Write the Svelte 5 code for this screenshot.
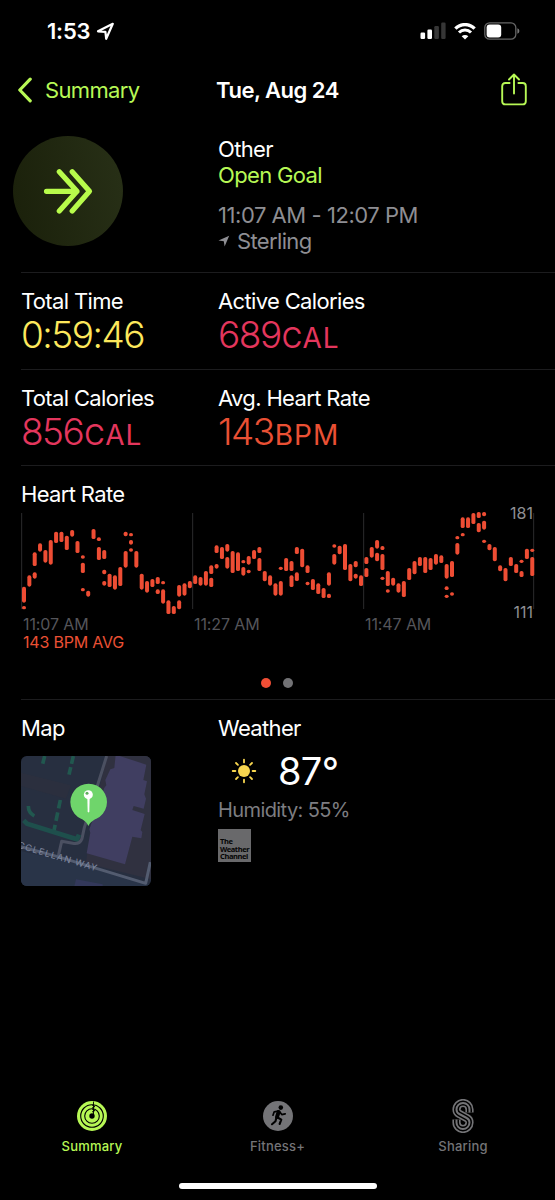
<script>
	const stats = [
		[
			{ label: 'Total Time', value: '0:59:46', unit: '', kind: 'time' },
			{ label: 'Active Calories', value: '689', unit: 'CAL', kind: 'cal' }
		],
		[
			{ label: 'Total Calories', value: '856', unit: 'CAL', kind: 'cal' },
			{ label: 'Avg. Heart Rate', value: '143', unit: 'BPM', kind: 'bpm' }
		]
	];

	// one entry per column, each a list of [top, bottom] ranges in chart units
	const heartRate = [
		[[320, 368], [378, 388]], [[286, 320]], [[217, 258], [277, 296]], [[190, 215]],
		[[210, 248]], [[180, 254]], [[155, 189]], [[155, 186]],
		[[167, 210]], [[150, 170]], [[183, 219]], [[226, 236], [248, 279], [324, 334]],
		[[332, 350]], [[147, 177]], [[172, 183], [201, 240]], [[210, 237], [269, 283], [303, 317]],
		[[281, 321]], [[286, 329]], [[261, 318]], [[155, 169], [213, 263]],
		[[159, 169], [180, 194], [205, 215]], [[213, 263]], [[281, 329]], [[303, 338]],
		[[297, 321]], [[291, 312], [328, 342]], [[303, 313], [328, 371]], [[361, 402]],
		[[378, 402]], [[315, 350], [361, 388]], [[310, 347]], [[303, 325]],
		[[286, 312]], [[291, 317]], [[273, 317]], [[256, 282], [293, 321]],
		[[196, 219], [252, 266]], [[201, 237]], [[192, 215], [231, 266]], [[213, 279]],
		[[217, 273]], [[240, 250], [261, 287]], [[228, 254], [269, 280]], [[210, 237]],
		[[201, 219], [234, 273]], [[273, 304]], [[286, 317]], [[310, 347]],
		[[260, 270], [303, 347]], [[234, 273]], [[243, 273], [286, 321]], [[201, 222], [277, 303]],
		[[206, 262]], [[256, 279], [305, 316]], [[297, 330]], [[310, 342]],
		[[324, 354]], [[277, 317], [341, 354]], [[193, 203], [222, 254]], [[197, 223]],
		[[192, 270]], [[252, 304]], [[243, 262], [281, 296]], [[286, 318]],
		[[231, 252], [264, 291]], [[201, 233]], [[180, 206], [218, 244]], [[198, 210], [222, 270], [290, 300]],
		[[273, 318], [328, 338]], [[293, 317]], [[310, 338]], [[303, 351]],
		[[264, 300]], [[243, 283]], [[231, 258]], [[231, 279]],
		[[234, 270]], [[222, 254]], [[226, 249]], [[252, 296], [319, 330], [344, 354]],
		[[243, 291], [337, 347]], [[168, 178], [189, 224]], [[112, 144], [159, 169]], [[112, 144]],
		[[99, 132]], [[96, 114], [129, 157]], [[96, 109], [122, 149], [179, 189]], [[192, 211]],
		[[201, 244]], [[256, 274]], [[264, 304]], [[231, 258]],
		[[252, 279]], [[239, 249], [273, 291]], [[206, 237]], [[206, 216], [231, 288]]
	];

	const times = ['11:07 AM', '11:27 AM', '11:47 AM'];
	const rays = [0, 45, 90, 135, 180, 225, 270, 315];

	let tab = $state('Summary');
	let page = $state(0);
</script>

<div class="screen">
	<div class="status">
		<span class="clock">1:53</span>
		<svg class="loc" width="19" height="19" viewBox="0 0 19 19">
			<path d="M2 9.3 L16.800 1.800 L10.200 16.800 L9.400 9.800 Z" fill="none" stroke="#fff" stroke-width="2.200" stroke-linejoin="round" />
		</svg>
		<svg class="signal" width="26" height="18" viewBox="0 0 26 18">
			<rect x="0.5" y="10.5" width="4.6" height="6.5" rx="1.2" fill="#fff" />
			<rect x="7.4" y="7.5" width="4.6" height="9.5" rx="1.2" fill="#fff" />
			<rect x="14.3" y="4" width="4.6" height="13" rx="1.2" fill="#363636" />
			<rect x="21.2" y="0.5" width="4.4" height="16.5" rx="1.2" fill="#363636" />
		</svg>
		<svg class="wifi" width="22" height="17" viewBox="0 0 22 17">
			<path d="M1.4 5.6 A13.4 13.4 0 0 1 20.6 5.6" fill="none" stroke="#fff" stroke-width="3.3" />
			<path d="M5 9.500 A8.300 8.300 0 0 1 17 9.500" fill="none" stroke="#fff" stroke-width="3" />
			<path d="M11 16.6 L7.7 13.3 A4.7 4.7 0 0 1 14.3 13.3 Z" fill="#fff" />
		</svg>
		<svg class="battery" width="36" height="18" viewBox="0 0 36 18">
			<rect x="0.8" y="0.8" width="31" height="16.4" rx="4.8" fill="none" stroke="#666" stroke-width="1.3" />
			<rect x="2.6" y="2.6" width="14.6" height="12.8" rx="3" fill="#fff" />
			<path d="M33.4 6.3 Q35.4 7 35.4 9 Q35.4 11 33.4 11.7 Z" fill="#777" />
		</svg>
	</div>

	<header>
		<button class="back">
			<svg width="16" height="26" viewBox="0 0 16 26">
				<path d="M13.2 2.2 L2.8 13 L13.2 23.8" fill="none" stroke="currentColor" stroke-width="3.2" stroke-linecap="round" stroke-linejoin="round" />
			</svg>
			<span>Summary</span>
		</button>
		<h1>Tue, Aug 24</h1>
		<button class="share" aria-label="Share">
			<svg width="26" height="34" viewBox="0 0 26 34">
				<g fill="none" stroke="currentColor" stroke-width="1.9" stroke-linecap="round" stroke-linejoin="round">
					<path d="M8.6 10 H4.4 Q1.2 10 1.2 13.2 V28.2 Q1.2 31.4 4.4 31.4 H21.6 Q24.8 31.4 24.8 28.2 V13.2 Q24.8 10 21.6 10 H17.4" />
					<path d="M13 20.5 V1.5 M8 6.5 L13 1.5 L18 6.5" />
				</g>
			</svg>
		</button>
	</header>

	<section class="hero">
		<svg width="110" height="110" viewBox="0 0 110 110">
			<defs>
				<linearGradient id="disc" x1="0" y1="0.6" x2="1" y2="0.4">
					<stop offset="0" stop-color="#1b210b" />
					<stop offset="1" stop-color="#272f16" />
				</linearGradient>
			</defs>
			<circle cx="55" cy="55" r="55" fill="url(#disc)" />
			<path d="M33.5 55.3 H64 M46.3 35.8 L64 55.3 L46.3 75 M59.2 35.8 L76.5 55.3 L59.2 75" fill="none" stroke="#b8fc4b" stroke-width="5.2" stroke-linecap="round" stroke-linejoin="round" />
		</svg>
		<div class="info">
			<p class="type">Other</p>
			<p class="goal">Open Goal</p>
			<p class="when">11:07 AM - 12:07 PM</p>
			<p class="place">
				<svg width="12" height="12" viewBox="0 0 12 12"><path d="M0.5 5.6 L11.2 0.7 L6.6 11.4 L5.8 6.3 Z" fill="#8e8e93" /></svg>
				Sterling
			</p>
		</div>
	</section>

	{#each stats as row}
		<section class="row">
			{#each row as stat}
				<div class="stat {stat.kind}">
					<h2>{stat.label}</h2>
					<p class="value">{stat.value}<small>{stat.unit}</small></p>
				</div>
			{/each}
		</section>
	{/each}

	<section class="heart">
		<h2>Heart Rate</h2>
		<div class="chart">
			<svg width="516" height="104" viewBox="-4 93 1548 312">
				{#each [-2, 511, 1024, 1534] as x}
					<line x1={x} x2={x} y1="99" y2="387" stroke="#2b2b2d" stroke-width="3" />
				{/each}
				{#each heartRate as ranges, i}
					{#each ranges as [top, bottom]}
						<rect x={i * 16.05 - 1} y={top} width="12" height={bottom - top} rx="5.5" fill="#ee4d34" />
					{/each}
				{/each}
			</svg>
			<span class="max">181</span>
			<span class="min">111</span>
		</div>
		<div class="times">
			{#each times as time}
				<span>{time}</span>
			{/each}
		</div>
		<p class="avg">143 BPM AVG</p>
		<div class="dots">
			{#each [0, 1] as i}
				<button class:on={page === i} aria-label="Page {i + 1}" onclick={() => (page = i)}></button>
			{/each}
		</div>
	</section>

	<section class="bottom">
		<div class="map">
			<h2>Map</h2>
			<svg width="130" height="130" viewBox="0 0 390 390">
				<defs>
					<clipPath id="tile"><rect width="390" height="390" rx="17" /></clipPath>
				</defs>
				<g clip-path="url(#tile)">
					<rect width="390" height="390" fill="#272f40" />
					<path d="M258 0 H390 V370 L195 322 L210 200 Z" fill="#303140" />
					<path d="M0 50 L150 88 L135 128 L0 90 Z" fill="#2b2f3e" />
					<path d="M0 285 L130 315 L385 385 L380 390 H0 Z" fill="#293448" />
					<path d="M165 370 L245 385 V390 H160 Z" fill="#33385a" />
					<path d="M284 -4 L376 26 L367 72 L378 76 L370 115 L375 128 L368 158 L338 150 L334 162 L371 174 L359 222 L364 228 L361 247 L334 242 L312 325 L197 292 L208 230 L205 220 L250 95 L256 88 L253 72 L268 40 L280 36 Z" fill="#403e61" />
					<g fill="none" stroke="#21584f" stroke-width="11">
						<path d="M71 0 L63 32 M157 0 L144 56" stroke-dasharray="24 10" />
						<path d="M118 132 L98 228" stroke-dasharray="26 12" />
						<path d="M22 150 Q22 170 40 180" />
						<path d="M8 193 L18 203 L168 250 L174 236" stroke-width="14" stroke="#1e4f4c" />
					</g>
					<g fill="none" stroke="#4b5061" stroke-width="9" stroke-linejoin="round">
						<path d="M257 0 L190 215 L183 248 Q176 266 155 262 L122 256 L112 300" />
						<path d="M0 272 L110 302 L374 382 L388 318" stroke="#535c70" />
					</g>
					<text x="-12" y="279" transform="rotate(16.5 0 279)">CCLELLAN WAY</text>
				</g>
				<path d="M202 210 C196 197 190 193 180 188 A55 55 0 1 1 226 188 C216 193 209 197 202 210 Z" fill="#6fd56b" />
				<circle cx="202" cy="116" r="13.5" fill="#fff" />
				<circle cx="198" cy="112" r="4.5" fill="#5fae5d" />
				<path d="M199 126 H206 L205 166 L202.5 170 L200 166 Z" fill="#fff" />
			</svg>
		</div>
		<div class="weather">
			<h2>Weather</h2>
			<div class="temp">
				<svg width="26" height="26" viewBox="-13 -13 26 26">
					<circle r="6" fill="#f8d64f" />
					{#each rays as angle}
						<line x1="0" y1="-8.6" x2="0" y2="-11.3" stroke="#f8d64f" stroke-width="1.8" stroke-linecap="round" transform="rotate({angle})" />
					{/each}
				</svg>
				<span>87°</span>
			</div>
			<p class="humidity">Humidity: 55%</p>
			<div class="source">The<br />Weather<br />Channel</div>
		</div>
	</section>

	<nav>
		<button class:active={tab === 'Summary'} onclick={() => (tab = 'Summary')}>
			<svg width="30" height="30" viewBox="0 0 30 30">
				<circle cx="15" cy="15" r="15" fill="currentColor" />
				<g fill="none" stroke="#000" stroke-width="1.1">
					<circle cx="15" cy="15" r="11.3" />
					<circle cx="15" cy="15" r="7.3" />
				</g>
				<circle cx="15" cy="15" r="2.7" fill="#000" />
				<path d="M16.5 0.6 V13 M15 4 L18 5.5 L15 7 M15 8 L18 9.5 L15 11" fill="none" stroke="#000" stroke-width="0.9" />
			</svg>
			<span>Summary</span>
		</button>
		<button class:active={tab === 'Fitness+'} onclick={() => (tab = 'Fitness+')}>
			<svg width="30" height="30" viewBox="0 0 30 30">
				<circle cx="15" cy="15" r="15" fill="currentColor" />
				<circle cx="17.8" cy="6.6" r="2.3" fill="#000" />
				<g fill="none" stroke="#000" stroke-linecap="round" stroke-linejoin="round">
					<path d="M15.6 11 L14 16" stroke-width="4" />
					<path d="M15 10.2 L11.2 10.8 L10 14.2 M17 11.2 L18.8 13.6 L22.2 12.8" stroke-width="1.7" />
					<path d="M14.6 16.5 L18.3 18.7 L16.6 23 M13.3 17 L12.5 20.2 L9 23.2" stroke-width="2.1" />
				</g>
			</svg>
			<span>Fitness+</span>
		</button>
		<button class:active={tab === 'Sharing'} onclick={() => (tab = 'Sharing')}>
			<svg width="22" height="34" viewBox="0 0 22 34">
				{#each [[8.2, 'currentColor'], [5, '#000'], [2, 'currentColor']] as [width, color]}
					<path d="M17.5 13.4 V10.5 A6.5 6.5 0 0 0 4.5 10.5 Q4.5 13.6 7.3 15 L14.7 19 Q17.5 20.4 17.5 23.5 A6.5 6.5 0 0 1 4.5 23.5 V20.6" fill="none" stroke={color} stroke-width={width} />
				{/each}
			</svg>
			<span>Sharing</span>
		</button>
	</nav>
	<div class="home"></div>
</div>

<style>
	:global(body) {
		background: #000;
	}

	.screen {
		width: 555px;
		height: 1200px;
		display: flex;
		flex-direction: column;
		overflow: hidden;
		background: #000;
		color: #fff;
		font-family: Inter, 'Liberation Sans', sans-serif;
		font-size: 22px;
		line-height: 26px;
		letter-spacing: -0.65px;
	}

	h1,
	h2,
	p {
		margin: 0;
		font-size: inherit;
		font-weight: 400;
	}

	button {
		padding: 0;
		border: 0;
		background: none;
		color: inherit;
		font: inherit;
		letter-spacing: inherit;
		cursor: pointer;
	}

	svg {
		display: block;
		flex: none;
	}

	.status {
		display: flex;
		align-items: center;
		height: 62px;
		padding: 0 35px 0 47px;
		box-sizing: border-box;
	}

	.clock {
		font-weight: 600;
		width: 49px;
		letter-spacing: -0.2px;
	}

	.signal {
		margin-left: auto;
	}

	.wifi {
		margin: 0 8px;
	}

	header {
		display: grid;
		grid-template-columns: 1fr auto 1fr;
		align-items: center;
		height: 56px;
		padding: 0 28px;
	}

	h1 {
		font-weight: 600;
		letter-spacing: -0.5px;
	}

	.back {
		display: flex;
		align-items: center;
		gap: 12px;
		margin-left: -11px;
		color: #b7f855;
	}

	.share {
		justify-self: end;
		color: #b7f855;
	}

	.hero {
		display: flex;
		height: 154px;
		padding: 18px 0 0 13px;
		box-sizing: border-box;
	}

	.info {
		margin-left: 95px;
	}

	.goal {
		color: #b7f855;
	}

	.when {
		margin-top: 14px;
		letter-spacing: -0.45px;
	}

	.when,
	.place {
		color: #8e8e93;
	}

	.place {
		display: flex;
		align-items: center;
		gap: 7px;
	}

	.row,
	.heart,
	.bottom {
		margin-left: 21px;
		border-top: 1px solid #1c1c1e;
	}

	.row {
		display: grid;
		grid-template-columns: 197px 1fr;
		height: 96.5px;
		padding-top: 15.4px;
		box-sizing: border-box;
	}

	.value {
		font-size: 37px;
		font-weight: 350;
		line-height: 42px;
		letter-spacing: -1.5px;
	}

	.value small {
		font-size: 28px;
		font-weight: 400;
		letter-spacing: 1px;
		margin-left: 1px;
	}

	.time .value {
		color: #fde85c;
	}

	.cal .value {
		color: #e4365d;
	}

	.bpm .value {
		color: #ea5034;
	}

	.heart {
		height: 234px;
		padding-top: 15px;
		box-sizing: border-box;
	}

	.chart {
		position: relative;
		height: 104px;
		margin-top: 4px;
	}

	.max,
	.min {
		position: absolute;
		right: 22px;
		font-size: 16px;
		line-height: 20px;
		letter-spacing: 0;
		color: #8e8e93;
	}

	.max {
		top: -8px;
	}

	.min {
		top: 91px;
	}

	.times {
		display: grid;
		grid-template-columns: 171px 171px 1fr;
		padding-left: 2px;
		font-size: 16px;
		line-height: 18px;
		letter-spacing: -0.1px;
		color: #55555a;
	}

	.avg {
		padding-left: 2px;
		font-size: 16px;
		line-height: 18px;
		letter-spacing: -0.2px;
		color: #ea5034;
	}

	.dots {
		display: flex;
		gap: 12px;
		margin: 27px 0 0 240px;
	}

	.dots button {
		width: 10px;
		height: 10px;
		border-radius: 50%;
		background: #727275;
	}

	.dots button.on {
		background: #f04e35;
	}

	.bottom {
		display: grid;
		grid-template-columns: 197px 1fr;
		padding-top: 15px;
	}

	.map svg {
		margin-top: 15px;
	}

	.map text {
		fill: #8089a0;
		font-size: 27px;
		letter-spacing: 3.5px;
	}

	.temp {
		display: flex;
		align-items: center;
		gap: 21px;
		height: 56px;
		padding: 3px 0 0 13px;
		box-sizing: border-box;
		font-size: 38px;
	}

	.humidity {
		font-size: 20px;
		letter-spacing: -0.6px;
		color: #7d7d81;
	}

	.source {
		display: flex;
		align-items: end;
		width: 33px;
		height: 33px;
		margin-top: 6px;
		padding: 0 0 1px 2px;
		box-sizing: border-box;
		background: #69696b;
		color: #050505;
		font: 700 7.5px/7.7px 'Noto Sans', sans-serif;
		letter-spacing: -0.4px;
	}

	nav {
		display: flex;
		justify-content: space-between;
		margin-top: auto;
		padding: 0 42px;
	}

	nav button {
		display: flex;
		flex-direction: column;
		align-items: center;
		width: 100px;
		color: #747477;
		font-size: 13px;
		font-weight: 500;
		line-height: 16px;
		letter-spacing: 0.2px;
	}

	nav svg {
		height: 34px;
		margin-bottom: 5px;
	}

	nav button.active {
		color: #b7f855;
	}

	.home {
		width: 198px;
		height: 6px;
		margin: 29px auto 11px;
		border-radius: 3px;
		background: #fff;
	}
</style>
